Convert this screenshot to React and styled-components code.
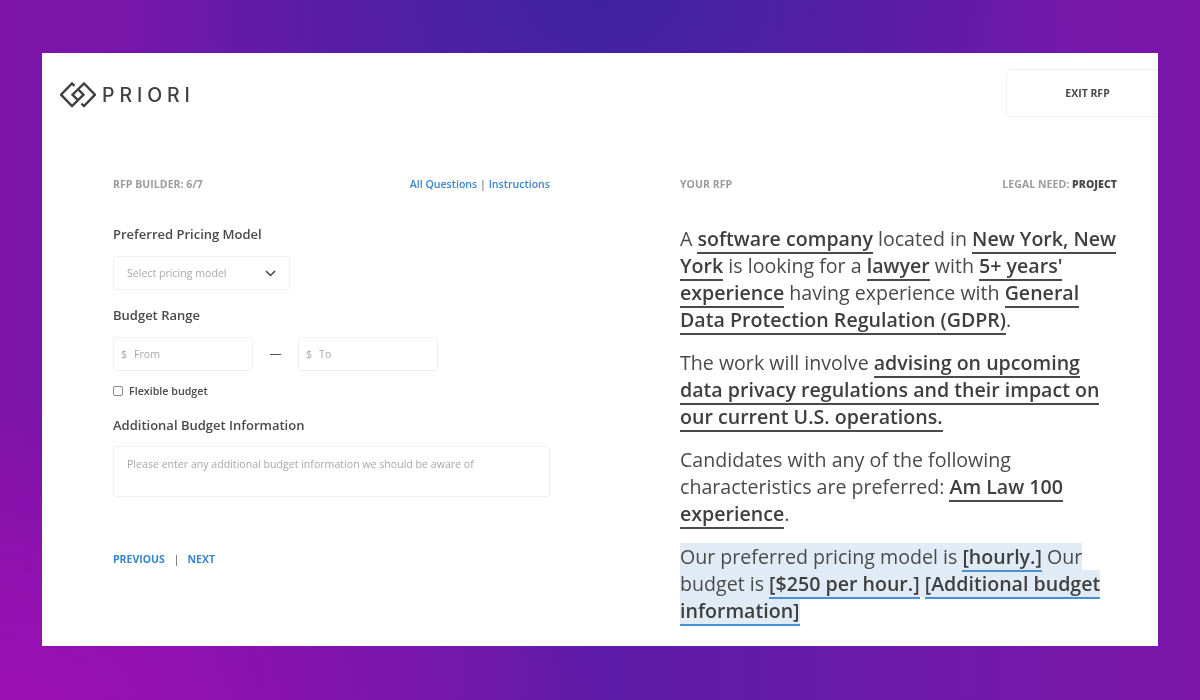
import React from "react";
import styled, { createGlobalStyle } from "styled-components";

const GlobalStyle = createGlobalStyle`
  html, body {
    margin: 0;
    height: 100%;
    overflow: hidden;
  }
  body {
    font-family: "Open Sans", "Liberation Sans", sans-serif;
  }
`;

const Logo = () => (
  <LogoWrap>
    <svg width="36" height="26" viewBox="0 0 36 26" fill="none" stroke="#404040" strokeWidth="2.4">
      <path d="M14.5 3.8 L12 1.5 L1 12.7 L12 24 L23.5 12.7 L18.6 7.8" />
      <path d="M21.5 21.6 L24 24 L35 12.7 L24 1.5 L12.5 12.7 L17.4 17.6" />
    </svg>
    <LogoText>PRIORI</LogoText>
  </LogoWrap>
);

const Chevron = () => (
  <ChevronIcon width="11" height="7" viewBox="0 0 11 7" fill="none" stroke="#444" strokeWidth="1.5">
    <path d="M1 1 L5.5 5.5 L10 1" />
  </ChevronIcon>
);

const App = () => {
  return (
    <Page>
      <GlobalStyle />
      <Card>
        <Header>
          <Logo />
          <ExitButton>EXIT RFP</ExitButton>
        </Header>
        <Columns>
          <section>
            <TopRow>
              <Caption>RFP BUILDER: 6/7</Caption>
              <TopLinks>
                <a>All Questions</a> <span>|</span> <a>Instructions</a>
              </TopLinks>
            </TopRow>
            <Label $top={33}>Preferred Pricing Model</Label>
            <SelectBox>
              Select pricing model
              <Chevron />
            </SelectBox>
            <Label $top={16}>Budget Range</Label>
            <RangeRow>
              <MoneyInput>
                <span>$</span>
                From
              </MoneyInput>
              <Dash />
              <MoneyInput>
                <span>$</span>
                To
              </MoneyInput>
            </RangeRow>
            <CheckRow>
              <CheckBox />
              Flexible budget
            </CheckRow>
            <Label $top={17}>Additional Budget Information</Label>
            <TextBox>Please enter any additional budget information we should be aware of</TextBox>
            <Pager>
              <a>PREVIOUS</a>
              <span>|</span>
              <a>NEXT</a>
            </Pager>
          </section>
          <section>
            <TopRow>
              <Caption>YOUR RFP</Caption>
              <Caption>
                LEGAL NEED: <strong>PROJECT</strong>
              </Caption>
            </TopRow>
            <Summary>
              <p>
                A <Term>software company</Term> located in <Term>New York, New York</Term> is looking for a{" "}
                <Term>lawyer</Term> with <Term>5+ years' experience</Term> having experience with{" "}
                <Term>General Data Protection Regulation (GDPR)</Term>.
              </p>
              <p>
                The work will involve{" "}
                <Term>advising on upcoming data privacy regulations and their impact on our current U.S. operations.</Term>
              </p>
              <p>
                Candidates with any of the following characteristics are preferred: <Term>Am Law 100 experience</Term>.
              </p>
              <p>
                <Active>
                  Our preferred pricing model is <Term $active>[hourly.]</Term> Our budget is{" "}
                  <Term $active>[$250 per hour.]</Term> <Term $active>[Additional budget information]</Term>
                </Active>
              </p>
            </Summary>
          </section>
        </Columns>
      </Card>
    </Page>
  );
};

const Page = styled.div`
  height: 700px;
  box-sizing: border-box;
  padding: 53px 42px 54px;
  background:
    radial-gradient(ellipse 480px 300px at 50% 0, #3f22a2 0%, rgba(63, 34, 162, 0) 100%),
    radial-gradient(ellipse 620px 300px at 0 100%, #9c0fb2 0%, rgba(156, 15, 178, 0) 100%),
    linear-gradient(90deg, #7f14aa 0%, #5c1ca8 50%, #7c16aa 100%);
`;

const Card = styled.div`
  height: 593px;
  background: #fff;
  overflow: hidden;
`;

const Header = styled.header`
  display: flex;
  justify-content: space-between;
  align-items: center;
  height: 48px;
  padding: 16px 0 0 18px;
  will-change: opacity;
`;

const LogoWrap = styled.div`
  display: flex;
  align-items: center;
  gap: 6px;
  padding-top: 4px;
`;

const LogoText = styled.span`
  font-family: "Inter", sans-serif;
  font-size: 19.5px;
  font-weight: 500;
  letter-spacing: 4.9px;
  color: #404040;
`;

const ExitButton = styled.div`
  flex: none;
  width: 163px;
  height: 48px;
  box-sizing: border-box;
  margin-right: -11px;
  display: flex;
  align-items: center;
  justify-content: center;
  border: 1px solid #f1f1f1;
  border-radius: 4px;
  font-size: 10.5px;
  font-weight: 700;
  color: #4a4a4a;
`;

const Columns = styled.div`
  display: grid;
  grid-template-columns: 437px 437px;
  column-gap: 130px;
  padding: 59px 0 0 71px;
  will-change: opacity;
`;

const TopRow = styled.div`
  display: flex;
  justify-content: space-between;
  align-items: center;
  height: 16px;
`;

const Caption = styled.div`
  font-size: 10.5px;
  font-weight: 700;
  letter-spacing: 0.05px;
  color: #9b9b9b;

  strong {
    color: #4a4a4a;
  }
`;

const TopLinks = styled.div`
  font-size: 10.6px;
  font-weight: 600;
  color: #3b84d0;

  span {
    color: #555;
    font-weight: 400;
  }
`;

const Label = styled.div`
  margin-top: ${(p) => p.$top}px;
  font-size: 13px;
  font-weight: 600;
  line-height: 18px;
  color: #4a4a4a;
`;

const fieldBox = `
  box-sizing: border-box;
  border: 1px solid #efefef;
  border-radius: 3px;
  font-size: 10.6px;
  color: #a8a8a8;
`;

const SelectBox = styled.div`
  ${fieldBox}
  display: flex;
  align-items: center;
  justify-content: space-between;
  width: 177px;
  height: 34px;
  margin-top: 13px;
  padding: 0 13px;
`;

const ChevronIcon = styled.svg`
  flex: none;
`;

const RangeRow = styled.div`
  display: flex;
  align-items: center;
  margin-top: 13px;
`;

const MoneyInput = styled.div`
  ${fieldBox}
  display: flex;
  align-items: center;
  width: 140px;
  height: 34px;
  padding: 0 7px;

  span {
    margin-right: 7px;
  }
`;

const Dash = styled.div`
  width: 11px;
  height: 1px;
  margin: 0 17px;
  background: #555;
`;

const CheckRow = styled.div`
  display: flex;
  align-items: center;
  gap: 6px;
  margin-top: 12px;
  font-size: 10.7px;
  font-weight: 600;
  line-height: 16px;
  color: #4a4a4a;
`;

const CheckBox = styled.div`
  width: 8px;
  height: 8px;
  border: 1px solid #888;
  border-radius: 2px;
`;

const TextBox = styled.div`
  ${fieldBox}
  width: 437px;
  height: 51px;
  margin-top: 12px;
  padding: 10px 13px;
  line-height: 14px;
`;

const Pager = styled.div`
  display: flex;
  align-items: center;
  gap: 9px;
  margin-top: 55px;
  font-size: 10.5px;
  font-weight: 700;
  color: #3b84d0;

  span {
    color: #555;
    font-weight: 400;
    margin-right: -1px;
  }
`;

const Summary = styled.div`
  margin-top: 33px;
  font-size: 19.6px;
  line-height: 27px;
  color: #4a4a4a;

  p {
    margin: 0 0 16px;
  }
`;

/* relative so the underline paints above the next line's highlight */
const Term = styled.span`
  position: relative;
  font-weight: 600;
  color: #3f3f3f;
  border-bottom: 2px solid ${(p) => (p.$active ? "#4a90d9" : "#4a4a4a")};
`;

const Active = styled.span`
  background: #e1ebf6;
`;

export default App;
